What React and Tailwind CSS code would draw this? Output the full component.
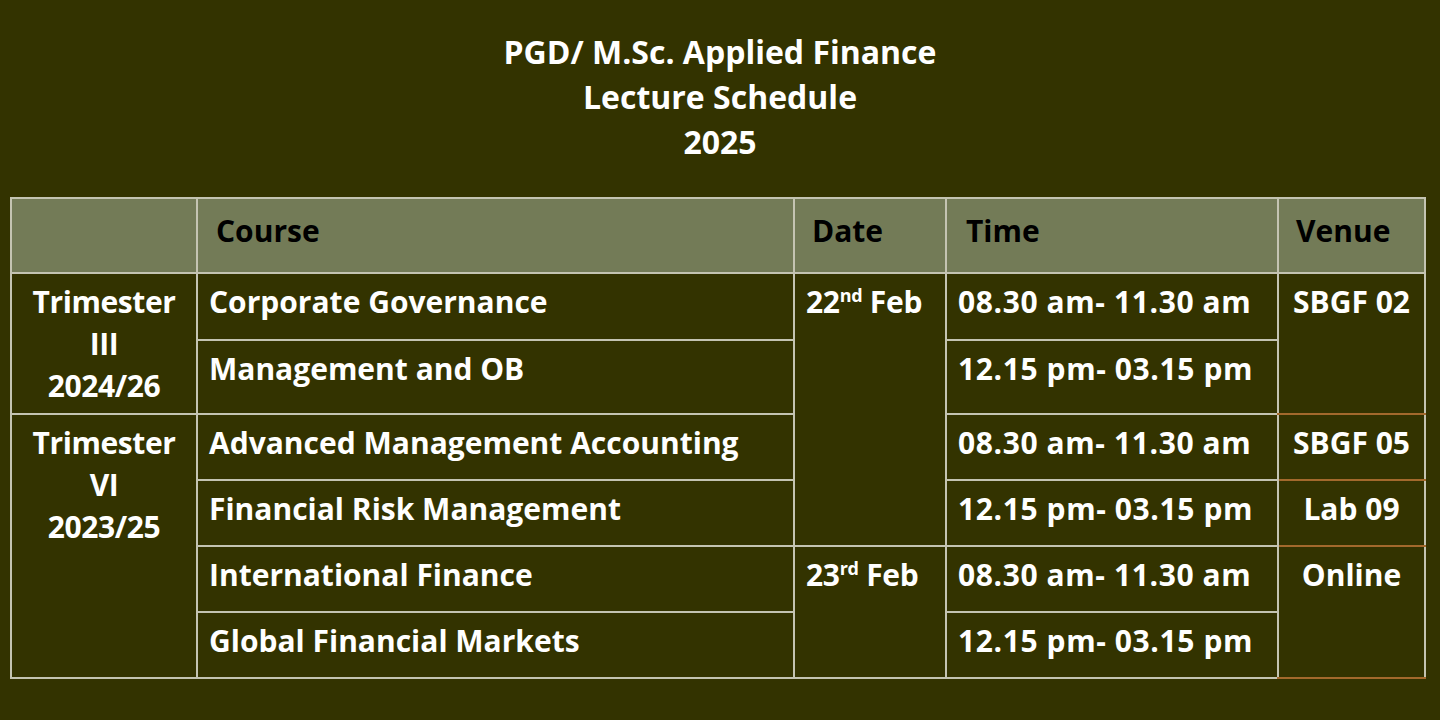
const rows = [
  { course: 'Corporate Governance', time: '08.30 am- 11.30 am' },
  { course: 'Management and OB', time: '12.15 pm- 03.15 pm' },
  { course: 'Advanced Management Accounting', time: '08.30 am- 11.30 am' },
  { course: 'Financial Risk Management', time: '12.15 pm- 03.15 pm' },
  { course: 'International Finance', time: '08.30 am- 11.30 am' },
  { course: 'Global Financial Markets', time: '12.15 pm- 03.15 pm' },
];

const heights = ['h-[67px]', 'h-[74px]', 'h-[66px]', 'h-[66px]', 'h-[66px]', 'h-[66px]'];

const cell = 'border-2 border-[#c4c4b2] align-top pt-[7px] leading-[42px]';

function DateCell({ day, sup, span }) {
  return (
    <td rowSpan={span} className={`${cell} pl-[11px] tracking-[-0.3px]`}>
      {day}
      <sup className="text-[18px] relative top-[-11px] align-baseline leading-none">{sup}</sup> Feb
    </td>
  );
}

export default function App() {
  return (
    <div
      className="w-[1440px] h-[720px] bg-[#333300] text-white overflow-hidden"
      style={{ fontFamily: '"Open Sans", Lato, sans-serif' }}
    >
      <div className="pt-[29px] text-center font-bold text-[32px] leading-[45px]">
        <p>PGD/ M.Sc. Applied Finance</p>
        <p>Lecture Schedule</p>
        <p>2025</p>
      </div>

      <table className="mt-[33px] ml-[10px] w-[1414px] border-collapse table-fixed font-bold text-[30px]">
        <colgroup>
          <col className="w-[186px]" />
          <col className="w-[597px]" />
          <col className="w-[152px]" />
          <col className="w-[332px]" />
          <col className="w-[147px]" />
        </colgroup>
        <thead>
          <tr className="h-[75px] bg-[#737b57] text-black">
            <th className={`${cell} pt-[11px]`}></th>
            <th className={`${cell} pt-[11px] text-left pl-[18px]`}>Course</th>
            <th className={`${cell} pt-[11px] text-left pl-[17px]`}>Date</th>
            <th className={`${cell} pt-[11px] text-left pl-[19px]`}>Time</th>
            <th className={`${cell} pt-[11px] text-left pl-[17px]`}>Venue</th>
          </tr>
        </thead>
        <tbody>
          {rows.map((r, i) => (
            <tr key={i} className={heights[i]}>
              {i === 0 && (
                <td rowSpan={2} className={`${cell} text-center tracking-[-0.4px]`}>
                  Trimester
                  <br />
                  III
                  <br />
                  2024/26
                </td>
              )}
              {i === 2 && (
                <td rowSpan={4} className={`${cell} text-center tracking-[-0.4px]`}>
                  Trimester
                  <br />
                  VI
                  <br />
                  2023/25
                </td>
              )}
              <td className={`${cell} pl-[11px]`}>{r.course}</td>
              {i === 0 && <DateCell day="22" sup="nd" span={4} />}
              {i === 4 && <DateCell day="23" sup="rd" span={2} />}
              <td className={`${cell} pl-[11px] tracking-[0.6px]`}>{r.time}</td>
              {i === 0 && (
                <td rowSpan={2} className={`${cell} text-center border-b-[#a3692c]`}>
                  SBGF 02
                </td>
              )}
              {i === 2 && (
                <td className={`${cell} text-center border-t-[#a3692c] border-b-[#a3692c]`}>SBGF 05</td>
              )}
              {i === 3 && (
                <td className={`${cell} text-center border-t-[#a3692c] border-b-[#a3692c]`}>Lab 09</td>
              )}
              {i === 4 && (
                <td rowSpan={2} className={`${cell} text-center border-t-[#a3692c] border-b-[#a3692c]`}>
                  Online
                </td>
              )}
            </tr>
          ))}
        </tbody>
      </table>
    </div>
  );
}
